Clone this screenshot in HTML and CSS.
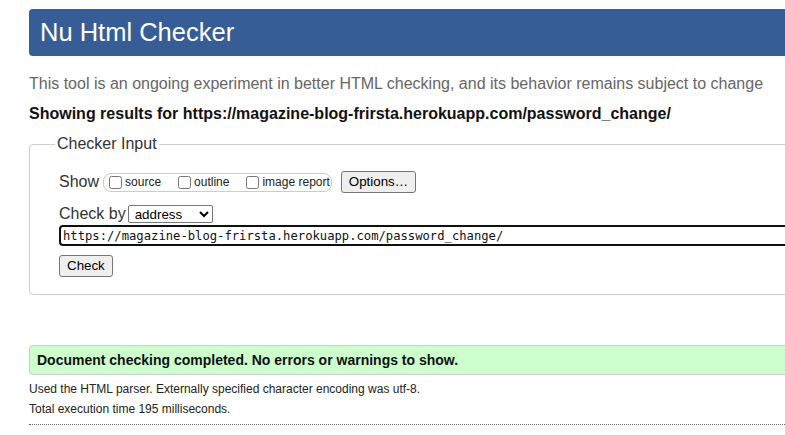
FILE: index.html
```html
<!DOCTYPE html>
<html>
<head>
<meta charset="utf-8">
<title>Nu Html Checker</title>
<link rel="stylesheet" href="styles.css">
</head>
<body>
<div class="page">
  <h1 class="title">Nu Html Checker</h1>
  <p class="intro">This tool is an ongoing experiment in better HTML checking, and its behavior remains subject to change</p>
  <p class="showing">Showing results for https://magazine-blog-frirsta.herokuapp.com/password_change/</p>
  <fieldset class="checker">
    <legend class="legend">Checker Input</legend>
    <div class="row row-show">
      <span class="label">Show</span>
      <span class="group">
        <label class="opt"><input type="checkbox" class="cb">source</label>
        <label class="opt"><input type="checkbox" class="cb">outline</label>
        <label class="opt"><input type="checkbox" class="cb">image report</label>
      </span>
      <button class="btn btn-options">Options…</button>
    </div>
    <div class="row row-by">
      <span class="label">Check by</span>
      <select class="sel"><option>address</option></select>
    </div>
    <div class="row row-url">
      <input class="url" type="text" value="https://magazine-blog-frirsta.herokuapp.com/password_change/">
    </div>
    <div class="row row-check">
      <button class="btn">Check</button>
    </div>
  </fieldset>
  <p class="success">Document checking completed. No errors or warnings to show.</p>
  <p class="meta">Used the HTML parser. Externally specified character encoding was utf-8.</p>
  <p class="meta">Total execution time 195 milliseconds.</p>
  <hr class="rule">
</div>
</body>
</html>
```
FILE: styles.css
```css
html, body {
  margin: 0;
  padding: 0;
  overflow: hidden;
  background: #fff;
}
body {
  font-family: "Liberation Sans", Arial, sans-serif;
  color: #222;
}
.page {
  padding: 9px 0 0 29px;
  width: 900px;
}
.title {
  margin: 0;
  height: 47px;
  line-height: 46px;
  padding-left: 11px;
  background: #365d95;
  color: #fff;
  font-size: 25.5px;
  font-weight: normal;
  border-radius: 4px 0 0 4px;
}
.intro {
  margin: 19px 0 0;
  font-size: 16px;
  line-height: 18px;
  color: #666;
}
.showing {
  margin: 12px 0 0;
  font-size: 16px;
  line-height: 18px;
  font-weight: bold;
  color: #111;
}
.checker {
  margin: 12px 0 0;
  padding: 0 0 17px 29px;
  border: 1px solid #ccc;
  border-radius: 4px 0 0 4px;
  min-width: 0;
}
.legend {
  margin-left: -4px;
  padding: 0 2px;
  font-size: 16px;
  line-height: 18px;
  color: #333;
}
.row {
  display: flex;
  align-items: center;
}
.label {
  font-size: 16px;
  color: #333;
  line-height: 18px;
}
.row-show {
  margin-top: 18px;
  height: 22px;
}
.group {
  display: inline-flex;
  align-items: center;
  margin-left: 4px;
  height: 17px;
  padding: 0 1px 0 5px;
  border: 1px solid #ccc;
  border-radius: 8px;
}
.opt {
  display: inline-flex;
  align-items: center;
  font-size: 12px;
  color: #222;
  margin-right: 17px;
}
.opt:last-child {
  margin-right: 0;
}
.cb {
  margin: 0 3px 0 0;
  width: 13px;
  height: 13px;
}
.btn {
  font-family: "Liberation Sans", Arial, sans-serif;
  font-size: 13.33px;
  line-height: 15px;
  padding: 2px 7px 3px;
  background: #efefef;
  border: 1px solid #767676;
  border-radius: 3px;
  color: #000;
}
.btn-options {
  margin-left: 9px;
}
.row-by {
  margin-top: 12px;
  height: 18px;
}
.sel {
  margin-left: 2px;
  width: 85px;
  height: 18px;
  font-family: "Liberation Sans", Arial, sans-serif;
  font-size: 13.33px;
  border: 1px solid #767676;
  border-radius: 2px;
  background: #fff;
  padding: 0 0 0 2px;
}
.row-url {
  margin-top: 2px;
}
.url {
  width: 820px;
  height: 21px;
  box-sizing: border-box;
  border: 2px solid #101010;
  border-radius: 4px;
  padding: 0 0 0 2px;
  font-family: "DejaVu Sans Mono", monospace;
  font-size: 12.2px;
  color: #111;
  outline: none;
}
.row-check {
  margin-top: 9px;
}
.success {
  margin: 50px 0 0;
  height: 28px;
  line-height: 28px;
  padding-left: 7px;
  background: #ccffcc;
  border: 1px solid #ccc;
  border-radius: 4px 0 0 4px;
  font-size: 14px;
  font-weight: bold;
  color: #111;
}
.meta {
  margin: 7px 0 0;
  font-size: 12px;
  line-height: 14px;
  color: #222;
}
.meta + .meta {
  margin-top: 6px;
}
.rule {
  margin: 8px 0 0;
  border: 0;
  border-top: 1px dotted #666;
  height: 0;
}
```
